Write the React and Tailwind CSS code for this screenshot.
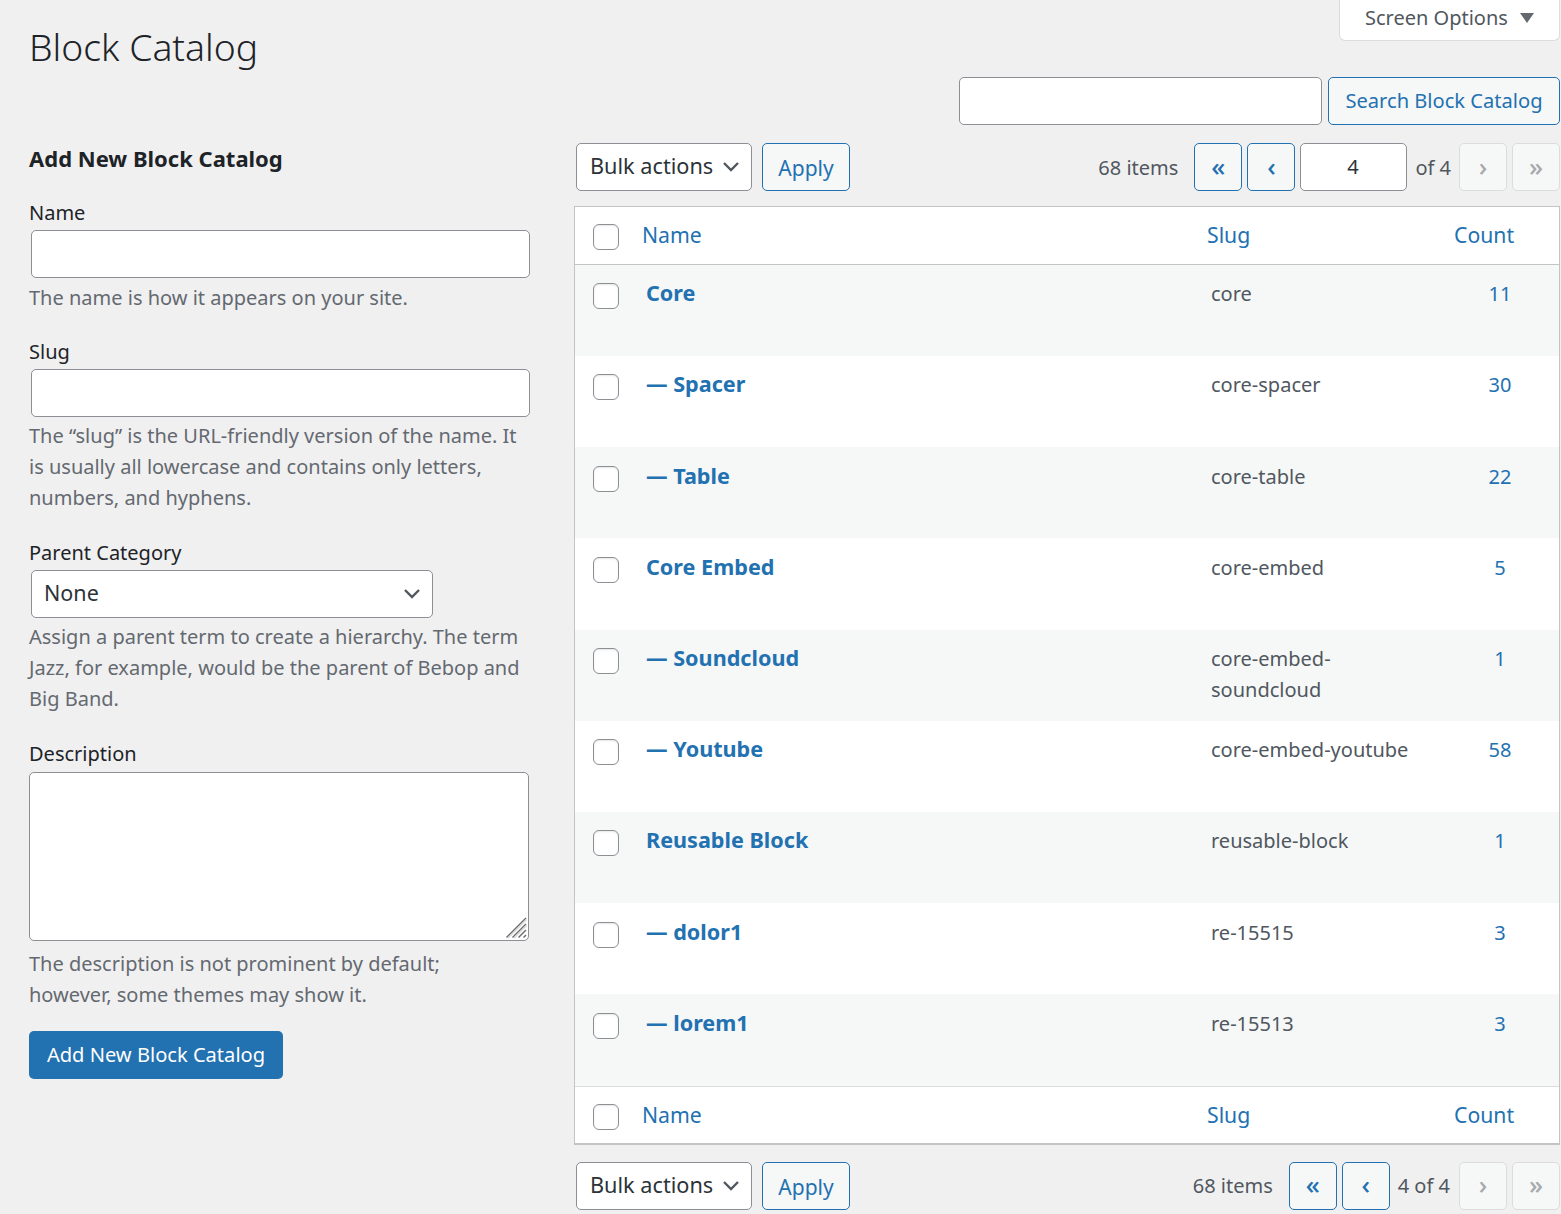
const rows = [
  { name: "Core", slug: ["core"], count: "11" },
  { name: "— Spacer", slug: ["core-spacer"], count: "30" },
  { name: "— Table", slug: ["core-table"], count: "22" },
  { name: "Core Embed", slug: ["core-embed"], count: "5" },
  { name: "— Soundcloud", slug: ["core-embed-", "soundcloud"], count: "1" },
  { name: "— Youtube", slug: ["core-embed-youtube"], count: "58" },
  { name: "Reusable Block", slug: ["reusable-block"], count: "1" },
  { name: "— dolor1", slug: ["re-15515"], count: "3" },
  { name: "— lorem1", slug: ["re-15513"], count: "3" },
];

function Chevron() {
  return (
    <svg width="18" height="18" viewBox="0 0 18 18" fill="none" className="shrink-0">
      <path d="M2 6 L9 13 L16 6" stroke="#50575e" strokeWidth="2.4" />
    </svg>
  );
}

function Check() {
  return <span className="block w-[26px] h-[26px] rounded-[6px] border border-[#8c8f94] bg-white shadow-[inset_0_1px_2px_rgba(0,0,0,0.1)]" />;
}

function Pager({ glyph, off }) {
  return off ? (
    <span className="flex w-[48px] h-[48px] pb-[3px] items-center justify-center rounded-[5px] border border-[#dcdcde] bg-[#f6f7f7] text-[#a7aaad] text-[26px] font-medium leading-none">{glyph}</span>
  ) : (
    <span className="flex w-[48px] h-[48px] pb-[3px] items-center justify-center rounded-[5px] border border-[#2271b1] bg-[#f6f7f7] text-[#2271b1] text-[26px] font-medium leading-none">{glyph}</span>
  );
}

function Toolbar({ bottom }) {
  return (
    <div className="flex items-center h-[48px] pl-[1px]">
      <div className="flex w-[176px] h-[48px] items-center justify-between pb-[2px] pl-[13px] pr-[11px] rounded-[5px] border border-[#8c8f94] bg-white text-[#2c3338] text-[21.7px]">
        <span>Bulk actions</span>
        <Chevron />
      </div>
      <span className="flex ml-[10px] w-[88px] h-[48px] pt-[3px] items-center justify-center rounded-[5px] border border-[#2271b1] bg-[#f6f7f7] text-[#2271b1] text-[21px]">Apply</span>
      <div className="ml-auto flex items-center text-[#50575e] text-[20px]">
        <span className="mr-[16px] pt-[1px]">68 items</span>
        <div className="flex items-center gap-[5px]">
          <Pager glyph="«" />
          <Pager glyph="‹" />
          {bottom ? (
            <span className="ml-[3px] mr-[4px] pt-[1px]">4 of 4</span>
          ) : (
            <>
              <span className="flex w-[107px] h-[48px] pr-[2px] items-center justify-center rounded-[5px] border border-[#8c8f94] bg-white text-[#2c3338]">4</span>
              <span className="ml-[3px] mr-[3px] pt-[1px]">of 4</span>
            </>
          )}
          <Pager glyph="›" off />
          <Pager glyph="»" off />
        </div>
      </div>
    </div>
  );
}

function HeadRow({ top }) {
  return (
    <div className={`flex items-center text-[#2271b1] text-[21.2px] bg-white ${top ? "h-[57.8px] border-b border-[#c3c4c7]" : "h-[57px] border-t border-[#dcdcde]"}`}>
      <div className="w-[67px] pl-[18px] pt-[4px] shrink-0"><Check /></div>
      <div className={`w-[565px] shrink-0 ${top ? "pb-[2px]" : "pb-0"}`}>Name</div>
      <div className={`w-[247px] shrink-0 ${top ? "pb-[2px]" : "pb-0"}`}>Slug</div>
      <div className={top ? "pb-[2px]" : "pb-0"}>Count</div>
    </div>
  );
}

function Field({ label, className, children }) {
  return (
    <div className={className}>
      <div className="text-[#1d2327] text-[20px] leading-[30px]">{label}</div>
      {children}
    </div>
  );
}

function Help({ children, className = "" }) {
  return <p className={`text-[#646970] text-[20px] leading-[31px] ${className}`}>{children}</p>;
}

const inputCls = "block h-[48px] rounded-[5px] border border-[#8c8f94] bg-white";

export default function App() {
  return (
    <div className="min-h-[1214px] overflow-hidden bg-[#f0f0f1] font-['Noto_Sans',sans-serif]">
      <div className="flex items-start justify-between h-[77px]">
        <h1 className="pl-[29px] pt-[20px] text-[37.3px] leading-[54px] font-light text-[#1d2327]">Block Catalog</h1>
        <div className="flex items-center w-[221px] h-[41px] mr-[1px] pb-[4px] pl-[25px] rounded-b-[6px] border border-t-0 border-[#dcdcde] bg-white text-[#50575e] text-[20px]">
          <span>Screen Options</span>
          <span className="ml-[12px] w-0 h-0 border-x-[7px] border-x-transparent border-t-[10px] border-t-[#646970]" />
        </div>
      </div>

      <div className="flex justify-end gap-[6px] pr-[1px]">
        <div className={`${inputCls} w-[363px]`} />
        <span className="flex w-[232px] h-[48px] items-center justify-center rounded-[5px] border border-[#2271b1] bg-[#f6f7f7] text-[#2271b1] text-[20.1px]">Search Block Catalog</span>
      </div>

      <div className="flex mt-[18px]">
        <div className="w-[574px] shrink-0 pl-[29px]">
          <h2 className="text-[#1d2327] text-[22px] font-bold leading-[32px] -mt-[1px]">Add New Block Catalog</h2>

          <Field label="Name" className="mt-[24px]">
            <div className={`${inputCls} ml-[2px] mt-[2px] w-[499px]`} />
            <Help className="mt-[4px]">The name is how it appears on your site.</Help>
          </Field>

          <Field label="Slug" className="mt-[24px]">
            <div className={`${inputCls} ml-[2px] mt-[2px] w-[499px]`} />
            <Help className="mt-[3px]">The “slug” is the URL-friendly version of the name. It<br />is usually all lowercase and contains only letters,<br />numbers, and hyphens.</Help>
          </Field>

          <Field label="Parent Category" className="mt-[25px]">
            <div className={`${inputCls} ml-[2px] mt-[2px] w-[402px] flex items-center justify-between pb-[2px] pl-[12px] pr-[11px] text-[#2c3338] text-[21.5px]`}>
              <span>None</span>
              <Chevron />
            </div>
            <Help className="mt-[3px]">Assign a parent term to create a hierarchy. The term<br />Jazz, for example, would be the parent of Bebop and<br />Big Band.</Help>
          </Field>

          <Field label="Description" className="mt-[25px]">
            <div className="relative mt-[3px] w-[500px] h-[169px]">
              <textarea className="block w-full h-full resize-none rounded-[5px] border border-[#8c8f94] bg-white" />
              <svg width="24" height="24" viewBox="0 0 24 24" className="absolute right-[1px] bottom-[1px]" fill="none" strokeWidth="1.4">
                <path d="M2.5 21.5 L22 2" stroke="#6b6b6b" />
                <path d="M4 22 L22.5 3.5" stroke="#d8d8d8" />
                <path d="M8.5 21.5 L22 8" stroke="#6b6b6b" />
                <path d="M10 22 L22.5 9.5" stroke="#d8d8d8" />
                <path d="M14.5 21.5 L22 14" stroke="#6b6b6b" />
                <path d="M19.5 21.5 L22 19" stroke="#6b6b6b" />
              </svg>
            </div>
            <Help className="mt-[7px]">The description is not prominent by default;<br />however, some themes may show it.</Help>
          </Field>

          <span className="flex mt-[21px] w-[254px] h-[48px] items-center justify-center rounded-[5px] bg-[#2271b1] text-white text-[20.1px]">Add New Block Catalog</span>
        </div>

        <div className="flex-1 min-w-0 pr-[1px]">
          <div className="ml-[1px]"><Toolbar /></div>
          <div className="mt-[15px] border-x border-t border-b-2 border-[#c3c4c7]">
            <HeadRow top />
            {rows.map((r, i) => (
              <div key={r.name} className={`flex pt-[18.4px] ${i === 8 ? "h-[91.6px]" : "h-[91.2px]"} ${i % 2 === 0 ? "bg-[#f6f7f7]" : "bg-white"}`}>
                <div className="w-[71px] pl-[18px] shrink-0"><Check /></div>
                <div className="w-[565px] shrink-0 text-[#2271b1] text-[21.6px] font-bold leading-[24px] -mt-[2px]">{r.name}</div>
                <div className="w-[250px] shrink-0 text-[#50575e] text-[20px] leading-[31px] -mt-[5px]">
                  {r.slug.map((s) => <div key={s}>{s}</div>)}
                </div>
                <div className="w-[78px] text-center text-[#2271b1] text-[20px] leading-[31px] -mt-[5px]">{r.count}</div>
              </div>
            ))}
            <HeadRow />
          </div>
          <div className="mt-[17px] ml-[1px]"><Toolbar bottom /></div>
        </div>
      </div>
    </div>
  );
}
